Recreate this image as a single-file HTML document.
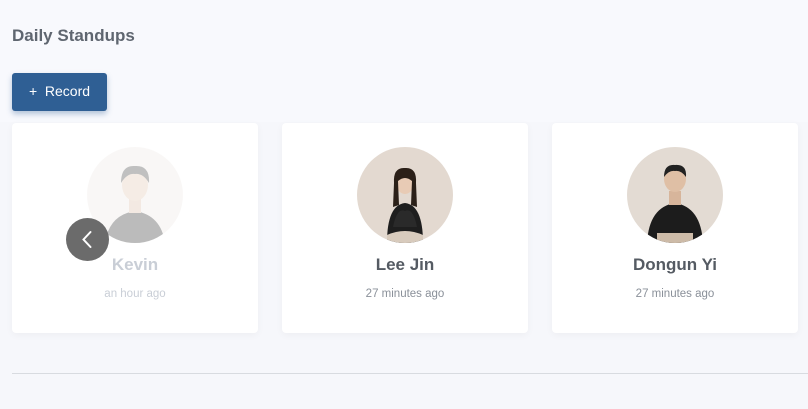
<!DOCTYPE html>
<html><head><style>
body{margin:0;width:808px;height:409px;overflow:hidden;background:#f6f7fb;font-family:"Liberation Sans",sans-serif;position:relative}
.top{position:absolute;left:0;top:0;width:808px;height:122px;background:#f8f9fd}
h1{position:absolute;left:12px;top:26px;margin:0;font-size:17px;font-weight:bold;color:#5f6670}
.btn{position:absolute;left:12px;top:73px;width:95px;height:38px;background:#2f5f94;border-radius:3px;color:#fff;font-size:14px;line-height:37px;text-align:center;box-shadow:0 3px 6px rgba(47,95,148,.35)}
.card{position:absolute;top:123px;width:246px;height:210px;background:#fff;border-radius:4px;box-shadow:0 2px 8px rgba(0,0,0,.04)}
.av{position:absolute;left:75px;top:24px;width:96px;height:96px;border-radius:50%;overflow:hidden}
.name{position:absolute;top:132px;width:100%;text-align:center;font-size:17px;font-weight:bold;color:#555b63}
.time{position:absolute;top:165px;width:100%;text-align:center;font-size:11.5px;color:#8a9099}
.fade .name,.fade .time{color:#c9ced6}
.fade .av{opacity:.3}
.arrow{position:absolute;left:66px;top:218px;width:43px;height:43px;border-radius:50%;background:#6b6b6b}
.line{position:absolute;left:12px;top:373px;width:796px;height:1px;background:#d8dbe0}
</style></head><body>
<div class="top"></div>
<h1>Daily Standups</h1>
<div class="btn">+&nbsp; Record</div>
<div class="card fade" style="left:12px"><div class="av"><svg width="96" height="96"><rect width="96" height="96" fill="#ece8e4"/><path d="M18 96 Q22 68 48 64 Q74 68 78 96Z" fill="#222"/><rect x="42" y="50" width="12" height="16" fill="#d9b9a0"/><ellipse cx="48" cy="38" rx="13" ry="16" fill="#e0c3aa"/><path d="M34 36 Q34 18 48 19 Q63 18 62 36 Q56 26 48 27 Q40 26 34 36Z" fill="#333"/></svg></div><div class="name">Kevin</div><div class="time">an hour ago</div></div>
<div class="card" style="left:282px"><div class="av"><svg width="96" height="96"><rect width="96" height="96" fill="#e3d9d0"/><path d="M30 96 Q30 58 48 56 Q66 58 66 96Z" fill="#1e1e1e"/><path d="M36 80 Q40 60 48 64 Q56 60 60 80Z" fill="#2a2a2a"/><ellipse cx="48" cy="36" rx="9" ry="11" fill="#e8cbb5"/><path d="M37 36 Q36 20 48 21 Q60 20 59 36 L60 60 L54 58 L55 34 Q48 28 41 34 L42 58 L36 60Z" fill="#2b2018"/><path d="M30 88 Q48 80 66 88 L66 96 L30 96Z" fill="#d8cbbd"/></svg></div><div class="name">Lee Jin</div><div class="time">27 minutes ago</div></div>
<div class="card" style="left:552px"><div class="av"><svg width="96" height="96"><rect width="96" height="96" fill="#e3dbd3"/><path d="M20 96 Q22 60 48 56 Q74 60 76 96Z" fill="#1c1c1c"/><rect x="42" y="44" width="12" height="14" fill="#d7b59b"/><ellipse cx="48" cy="32" rx="11" ry="13" fill="#dfbfa5"/><path d="M37 30 Q37 17 48 18 Q60 17 59 30 Q54 23 48 24 Q42 23 37 30Z" fill="#222"/><rect x="30" y="86" width="36" height="10" fill="#cdbba8"/></svg></div><div class="name">Dongun Yi</div><div class="time">27 minutes ago</div></div>
<div class="arrow"><svg width="43" height="43"><path d="M24.5 14 L17.5 21.5 L24.5 29" stroke="#fff" stroke-width="2" fill="none" stroke-linecap="round"/></svg></div>
<div class="line"></div>
</body></html>
